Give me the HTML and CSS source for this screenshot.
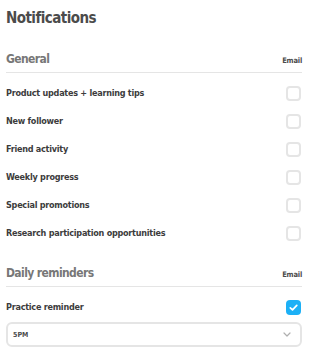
FILE: index.html
```html
<!DOCTYPE html>
<html>
<head>
<meta charset="utf-8">
<link rel="stylesheet" href="styles.css">
</head>
<body>
<div class="page">
  <h1 class="title">Notifications</h1>

  <div class="section-head first">
    <span class="section-title">General</span>
    <span class="col-label">Email</span>
  </div>
  <div class="rows">
    <div class="row"><span class="label">Product updates + learning tips</span><span class="box"></span></div>
    <div class="row"><span class="label">New follower</span><span class="box"></span></div>
    <div class="row"><span class="label">Friend activity</span><span class="box"></span></div>
    <div class="row"><span class="label">Weekly progress</span><span class="box"></span></div>
    <div class="row"><span class="label">Special promotions</span><span class="box"></span></div>
    <div class="row"><span class="label">Research participation opportunities</span><span class="box"></span></div>
  </div>

  <div class="section-head second">
    <span class="section-title">Daily reminders</span>
    <span class="col-label">Email</span>
  </div>
  <div class="rows">
    <div class="row"><span class="label">Practice reminder</span>
      <span class="box checked"><svg viewBox="0 0 15 15" width="15" height="15"><path d="M4.3 7.8 L6.5 9.9 L10.8 5.4" fill="none" stroke="#fff" stroke-width="1.7" stroke-linecap="round" stroke-linejoin="round"/></svg></span>
    </div>
  </div>
  <div class="select">
    <span class="select-value">5PM</span>
    <svg class="chev" viewBox="0 0 8 5" width="8" height="5"><path d="M1 1 L4 4 L7 1" fill="none" stroke="#afafaf" stroke-width="1.2" stroke-linecap="round" stroke-linejoin="round"/></svg>
  </div>
</div>
</body>
</html>
```

FILE: styles.css
```css
html, body {
  margin: 0;
  padding: 0;
  background: #fff;
}
body {
  font-family: "DejaVu Sans Condensed", "Liberation Sans", sans-serif;
  font-weight: 700;
}
.page {
  padding: 8px 8px 0 6px;
}
.title {
  margin: 0;
  font-size: 15px;
  letter-spacing: -0.55px;
  line-height: 20px;
  color: #4b4b4b;
  font-weight: 700;
}
.section-head {
  display: flex;
  justify-content: space-between;
  align-items: center;
  height: 20px;
  padding-bottom: 3px;
  border-bottom: 1px solid #e5e5e5;
}
.section-head.first { margin-top: 21px; }
.section-head.second { margin-top: 16px; }
.section-title {
  font-size: 12px;
  letter-spacing: -0.6px;
  color: #777777;
}
.col-label {
  font-size: 7.5px;
  letter-spacing: -0.2px;
  color: #4b4b4b;
  padding-top: 2px;
}
.rows {
  padding-top: 6px;
}
.row {
  display: flex;
  justify-content: space-between;
  align-items: center;
  height: 28px;
}
.label {
  font-size: 9px;
  letter-spacing: -0.25px;
  color: #3c3c3c;
}
.box {
  width: 11px;
  height: 11px;
  border: 2px solid #e5e5e5;
  border-radius: 4px;
  margin-right: 1px;
  display: flex;
  align-items: center;
  justify-content: center;
}
.box.checked {
  width: 15px;
  height: 15px;
  border: none;
  background: #1cb0f6;
}
.select {
  margin-top: 1px;
  height: 21px;
  border: 2px solid #e5e5e5;
  border-radius: 6px;
  display: flex;
  align-items: center;
  justify-content: space-between;
  padding: 0 9px 0 5px;
}
.select-value {
  font-size: 7px;
  color: #4b4b4b;
}
.chev {
  display: block;
}
```
